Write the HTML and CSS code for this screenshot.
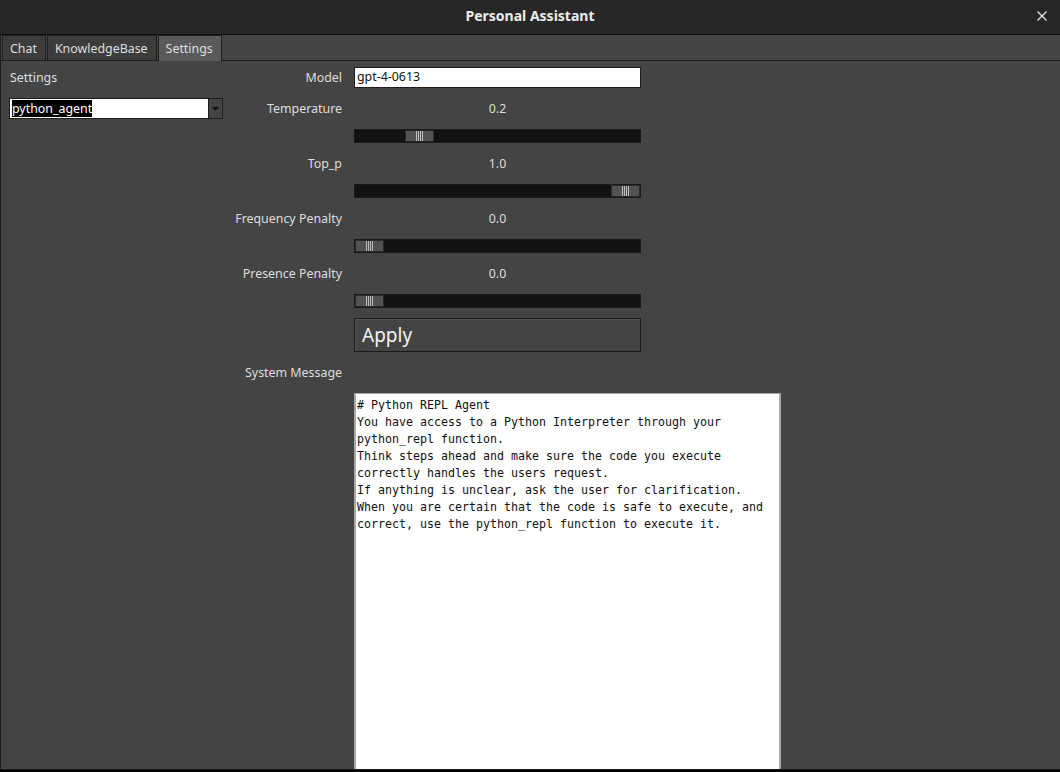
FILE: index.html
```html
<!DOCTYPE html>
<html>
<head>
<meta charset="utf-8">
<link rel="stylesheet" href="styles.css">
</head>
<body>
<div class="window">
  <header class="titlebar">
    <span class="title">Personal Assistant</span>
    <svg class="close" width="12" height="12" viewBox="0 0 12 12"><path d="M1.5 1.5 L10.5 10.5 M10.5 1.5 L1.5 10.5" stroke="#e6e6e6" stroke-width="1.3"/></svg>
  </header>
  <div class="main">
    <nav class="tabs">
      <div class="tab">Chat</div>
      <div class="tab">KnowledgeBase</div>
      <div class="tab active">Settings</div>
    </nav>
    <div class="pane">
      <aside class="side">
        <div class="side-title">Settings</div>
        <div class="combo">
          <div class="combo-field"><span class="sel">python_agent</span></div>
          <div class="combo-btn"><svg width="7" height="4" viewBox="0 0 7 4"><path d="M0 0 H7 L3.5 4 Z" fill="#111"/></svg></div>
        </div>
      </aside>
      <div class="form">
        <div class="row r20"><label class="lbl">Model</label><div class="field"><div class="input">gpt-4-0613</div></div></div>
        <div class="row r20"><label class="lbl">Temperature</label><div class="field value">0.2</div></div>
        <div class="row r14"><span class="lbl"></span><div class="field"><div class="slider"><div class="handle" style="margin-left:50px"><i></i><i></i><i></i><i></i></div></div></div></div>
        <div class="row r20"><label class="lbl">Top_p</label><div class="field value">1.0</div></div>
        <div class="row r14"><span class="lbl"></span><div class="field"><div class="slider"><div class="handle" style="margin-left:256px"><i></i><i></i><i></i><i></i></div></div></div></div>
        <div class="row r20"><label class="lbl">Frequency Penalty</label><div class="field value">0.0</div></div>
        <div class="row r14"><span class="lbl"></span><div class="field"><div class="slider"><div class="handle" style="margin-left:0px"><i></i><i></i><i></i><i></i></div></div></div></div>
        <div class="row r20"><label class="lbl">Presence Penalty</label><div class="field value">0.0</div></div>
        <div class="row r14"><span class="lbl"></span><div class="field"><div class="slider"><div class="handle" style="margin-left:0px"><i></i><i></i><i></i><i></i></div></div></div></div>
        <div class="row"><span class="lbl"></span><div class="field"><button class="apply">Apply</button></div></div>
        <div class="row r20"><label class="lbl">System Message</label><div class="field"></div></div>
        <div class="row"><span class="lbl"></span><div class="editor"># Python REPL Agent
You have access to a Python Interpreter through your
python_repl function.
Think steps ahead and make sure the code you execute
correctly handles the users request.
If anything is unclear, ask the user for clarification.
When you are certain that the code is safe to execute, and
correct, use the python_repl function to execute it.</div></div>
      </div>
    </div>
  </div>
</div>
</body>
</html>
```

FILE: styles.css
```css
* { box-sizing: border-box; }
html, body { margin: 0; padding: 0; }
body {
  background: #000;
  width: 1060px;
  height: 772px;
  overflow: hidden;
  font-family: "Noto Sans", "Open Sans", sans-serif;
  font-size: 12.4px;
  color: #dedede;
}
.window {
  width: 1060px;
  height: 770px;
  display: flex;
  flex-direction: column;
  border-bottom: 1px solid #1a1a1a;
  overflow: hidden;
}
.titlebar {
  height: 35px;
  flex: none;
  background: #272727;
  border-bottom: 1px solid #101010;
  display: flex;
  align-items: center;
  justify-content: center;
  position: relative;
}
.title {
  font-weight: bold;
  font-size: 14px;
  color: #ececec;
  margin-top: -3px;
}
.close {
  position: absolute;
  right: 12px;
  top: 10px;
}
.main {
  flex: 1;
  background: #444444;
  border-left: 1px solid #1c1c1c;
  display: flex;
  flex-direction: column;
  min-height: 0;
}
.tabs {
  display: flex;
  padding: 0 0 0 1px;
  height: 26px;
  flex: none;
  border-bottom: 1px solid #1e1e1e;
}
.tab {
  height: 25px;
  padding: 0 8px 0 7px;
  background: #3c3c3c;
  border: 1px solid #1e1e1e;
  border-bottom: none;
  margin-right: 1px;
  display: flex;
  align-items: center;
  color: #dedede;
}
.tab.active {
  background: #5a5a5a;
  height: 26px;
  margin-bottom: -1px;
}
.pane {
  flex: 1;
  display: flex;
  padding: 6px 0 0 8px;
  min-height: 0;
}
.side {
  width: 214px;
  flex: none;
}
.side-title {
  height: 21px;
  line-height: 21px;
  padding-left: 1px;
}
.combo {
  margin-top: 10px;
  height: 21px;
  display: flex;
  border: 1px solid #1e1e1e;
}
.combo-field {
  flex: 1;
  background: #fff;
  padding: 1px 0 0 2px;
  line-height: 17px;
}
.sel {
  background: #000;
  color: #fff;
  display: inline-block;
  line-height: 17px;
}
.combo-btn {
  width: 14px;
  background: #444;
  border-left: 1px solid #1e1e1e;
  display: flex;
  align-items: center;
  justify-content: center;
}
.form {
  display: flex;
  flex-direction: column;
  gap: 10px;
}
.row {
  display: flex;
  gap: 12px;
  align-items: center;
  flex: none;
}
.r20 { height: 21px; }
.r14 { height: 14px; }
.lbl {
  width: 119px;
  text-align: right;
  flex: none;
}
.field {
  width: 287px;
  flex: none;
}
.value {
  text-align: center;
}
.input {
  height: 21px;
  background: #fff;
  color: #111;
  border: 1px solid #1e1e1e;
  padding: 0 2px;
  line-height: 18px;
}
.slider {
  height: 14px;
  background: #121212;
  border: 1px solid #1a1a1a;
  display: flex;
  align-items: center;
}
.handle {
  width: 29px;
  height: 12px;
  background: #525252;
  border: 1px solid #2a2a2a;
  display: flex;
  justify-content: center;
  gap: 1px;
}
.handle i {
  width: 1px;
  background: #bdbdbd;
  height: 10px;
}
.apply {
  width: 287px;
  height: 34px;
  background: #444;
  border: 1px solid #1a1a1a;
  box-shadow: inset 1px 1px 0 #555;
  color: #f2f2f2;
  font-family: "Noto Sans", "Open Sans", sans-serif;
  font-size: 19px;
  text-align: left;
  padding: 0 0 1px 7px;
  margin: 0;
}
.editor {
  width: 427px;
  height: 380px;
  background: #fff;
  border-left: 2px solid #a8a8a8;
  border-top: 1px solid #a8a8a8;
  border-right: 2px solid #a8a8a8;
  color: #111;
  font-family: "DejaVu Sans Mono", monospace;
  font-size: 11.63px;
  line-height: 17px;
  white-space: pre;
  padding: 3px 0 0 1px;
}
```
